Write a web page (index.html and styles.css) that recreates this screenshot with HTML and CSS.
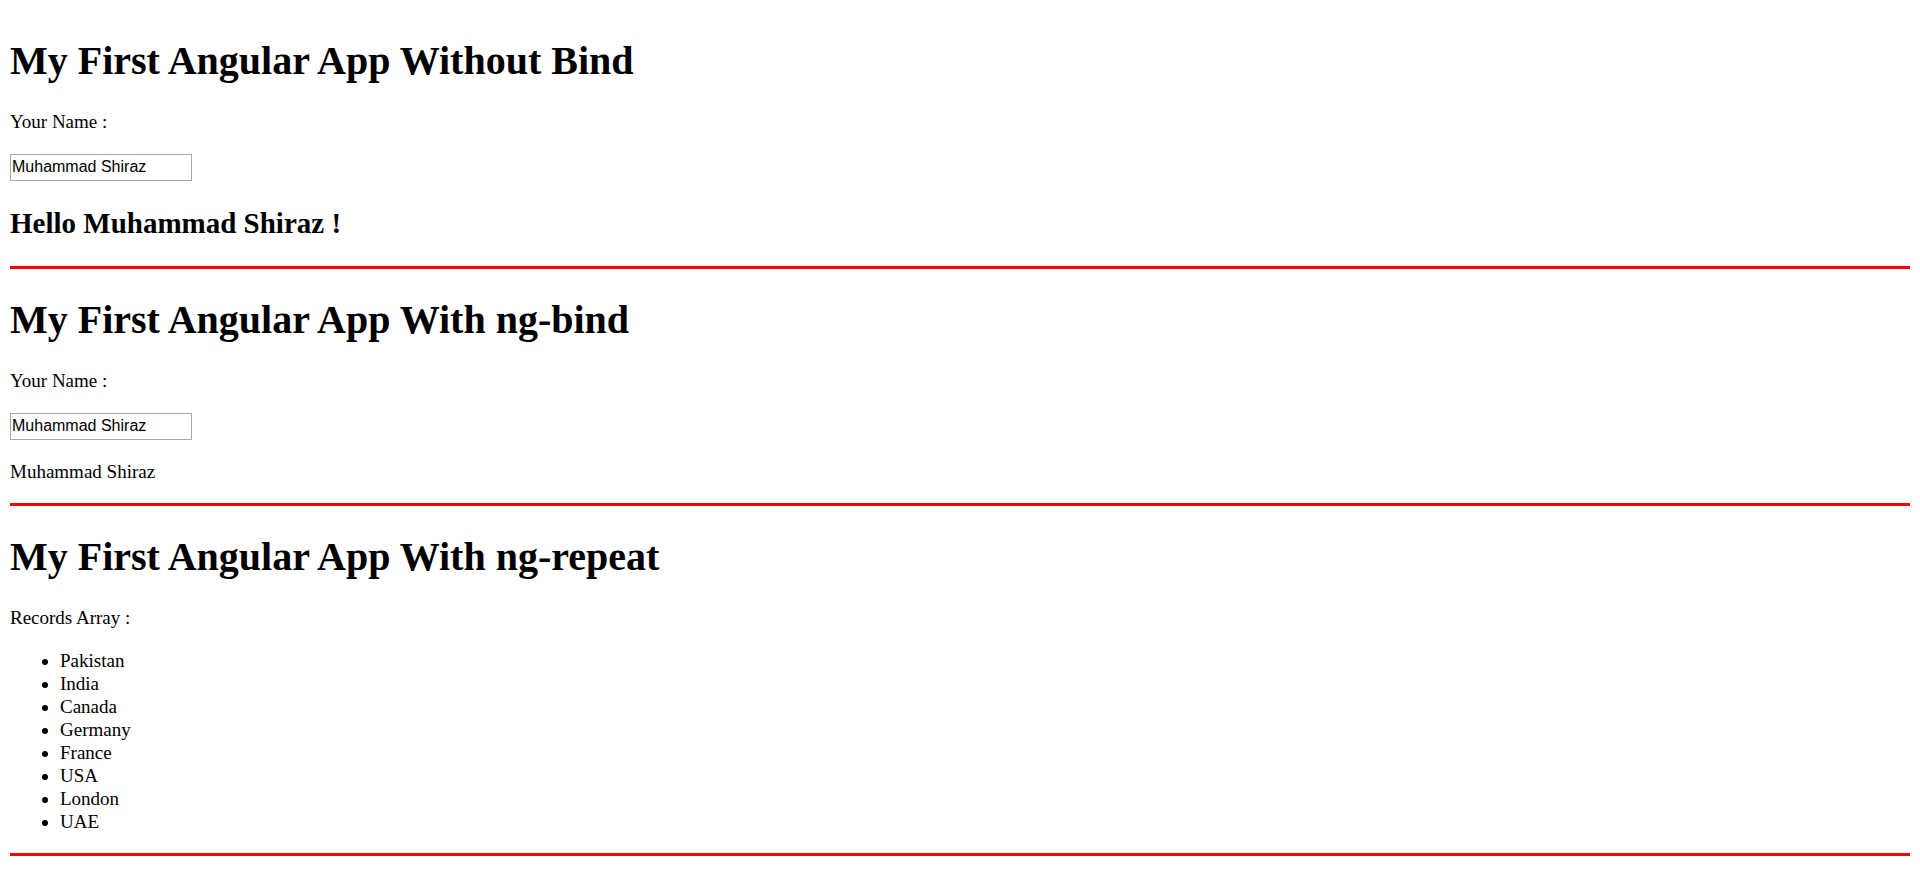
FILE: index.html
```
<!DOCTYPE html>
<html lang="en">
<head>
<meta charset="utf-8">
<title>My First Angular App</title>
<link rel="stylesheet" href="styles.css">
</head>
<body>
<section class="demo">
  <h1 class="title">My First Angular App Without Bind</h1>
  <label class="text" for="name-plain">Your Name :</label>
  <input class="field" id="name-plain" type="text" value="Muhammad Shiraz">
  <h2 class="greeting">Hello Muhammad Shiraz !</h2>
</section>
<section class="demo">
  <h1 class="title">My First Angular App With ng-bind</h1>
  <label class="text" for="name-bind">Your Name :</label>
  <input class="field" id="name-bind" type="text" value="Muhammad Shiraz">
  <p class="text">Muhammad Shiraz</p>
</section>
<section class="demo">
  <h1 class="title">My First Angular App With ng-repeat</h1>
  <p class="text">Records Array :</p>
  <ul class="records">
    <li>Pakistan</li>
    <li>India</li>
    <li>Canada</li>
    <li>Germany</li>
    <li>France</li>
    <li>USA</li>
    <li>London</li>
    <li>UAE</li>
  </ul>
</section>
</body>
</html>
```
FILE: styles.css
```
body {
  margin: 0;
  padding: 10px;
  background: #fff;
  color: #000;
  font-family: "Liberation Serif", "Times New Roman", serif;
  font-size: 19px;
  line-height: 23px;
}

.demo {
  display: flow-root;
  border-bottom: 3px solid #f00;
}

.title {
  margin: 28px 0 26px;
  font-size: 40px;
  line-height: 46px;
}

.text {
  display: block;
  margin: 20px 0;
}

.field {
  display: block;
  box-sizing: border-box;
  width: 182px;
  height: 27px;
  margin-top: 21px;
  padding: 0 1px 1px;
  border: 1px solid #a9a9a9;
  background: #fff;
  color: #000;
  font-family: "Liberation Sans", Arial, sans-serif;
  font-size: 16px;
}

.greeting {
  margin: 25px 0;
  font-size: 29px;
  line-height: 35px;
}

.records {
  margin: 20px 0;
  padding-left: 50px;
}
```
